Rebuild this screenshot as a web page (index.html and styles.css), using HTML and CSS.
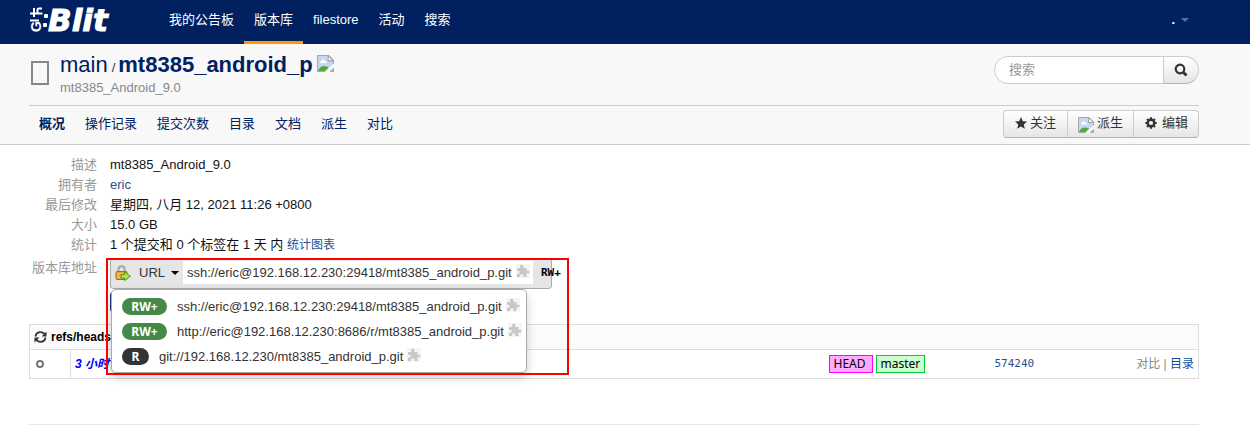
FILE: index.html
```html
<!DOCTYPE html>
<html lang="zh-CN">
<head>
<meta charset="utf-8">
<title>mt8385_android_p</title>
<link rel="stylesheet" href="styles.css">
</head>
<body>
<svg class="defs" aria-hidden="true">
  <symbol id="broken" viewBox="0 0 16 16">
    <path d="M.5 .5h10.500l4.500 4.500v10.500h-15z" fill="#c6d7f5" stroke="#a8a8a8"/>
    <path d="M3 7.500h6c0-2-1-2-1.800-1.800C6.500 3.500 4.500 4 4.500 5.500 3 5.500 3 6.500 3 7.500z" fill="#fff"/>
    <path d="M1 15c1-4 5-5 7-4.500l3 1L8 15z" fill="#53ab36"/>
    <path d="M10.500 .5v5h5z" fill="#fff" stroke="#a0a0a0"/>
    <path d="M7 16l9-8v4l-4 4z" fill="#f8f8f8"/>
    <path d="M12 15.500h3.500V12z" fill="#aaa"/>
  </symbol>
  <symbol id="puzzle" viewBox="0 0 14 14">
    <rect width="14" height="14" fill="#f5f5f5"/>
    <path d="M1 4h3.500C3.500 2.500 4 .8 5.700.8S8 2.500 7 4h3.500v3c1.500-1 3-.5 3 1s-1.500 2-3 1v4H7.200c1-2-.2-2.800-1.400-2.800S3.500 11.500 4.200 13H1V9.500c1.600.8 2.600 0 2.600-1.200S2.500 6.300 1 7z" fill="#c8c8c8"/>
  </symbol>
</svg>

<header class="topbar">
  <a class="logo" href="#" aria-label="Gitblit">
    <svg width="84" height="36" viewBox="0 0 84 36">
      <text class="logo-git" transform="translate(12 30) rotate(-90)">G</text>
      <path d="M1 18.500h9M1 11.500h12.500M5 6v9M8.500 11.500V7.500q0-1 1.500-1h3" fill="none" stroke="#fff" stroke-width="2"/>
      <rect x="15" y="12" width="4" height="4" rx="1" fill="#fff"/>
      <rect x="14" y="21" width="4" height="4" rx="1" fill="#fff"/>
      <text class="logo-blit" x="19" y="29">Blit</text>
    </svg>
  </a>
  <nav class="mainnav">
    <a href="#">我的公告板</a>
    <a class="current" href="#">版本库</a>
    <a href="#">filestore</a>
    <a href="#">活动</a>
    <a href="#">搜索</a>
  </nav>
  <a class="user" href="#"><span>.</span><i class="caret"></i></a>
</header>

<section class="repohead">
  <div class="titlebar">
    <span class="repoicon"></span>
    <div class="titles">
      <h1><a href="#">main</a><small>/</small><a class="strong" href="#">mt8385_android_p</a><svg width="17" height="17"><use href="#broken"/></svg></h1>
      <p>mt8385_Android_9.0</p>
    </div>
    <form class="search">
      <input type="text" placeholder="搜索" aria-label="搜索">
      <button type="button" aria-label="搜索"><svg width="14" height="14" viewBox="0 0 14 14"><circle cx="6" cy="6" r="4.300" fill="none" stroke="#333" stroke-width="2.200"/><path d="M9 9l3.500 3.500" stroke="#333" stroke-width="2.800"/></svg></button>
    </form>
  </div>
  <div class="tabs">
    <nav>
      <a class="current" href="#">概况</a>
      <a href="#">操作记录</a>
      <a href="#">提交次数</a>
      <a href="#">目录</a>
      <a href="#">文档</a>
      <a href="#">派生</a>
      <a href="#">对比</a>
    </nav>
    <div class="actions">
      <button type="button"><svg width="12" height="12" viewBox="0 0 12 12"><path d="M6 0l1.800 4.200 4.200.4-3.200 2.800 1 4.400L6 9.500l-3.800 2.300 1-4.400L0 4.600l4.200-.4z" fill="#333"/></svg>关注</button>
      <button type="button"><svg class="low" width="16" height="16"><use href="#broken"/></svg>派生</button>
      <button type="button"><svg class="gear" width="12" height="12" viewBox="0 0 12 12"><g stroke="#333"><circle cx="6" cy="6" r="3.300" fill="none" stroke-width="2.400"/><path d="M6 .3v1.700M6 10v1.700M.3 6H2M10 6h1.700M2 2l1.200 1.200M8.800 8.800L10 10M10 2L8.800 3.200M3.200 8.800L2 10" stroke-width="2.200"/></g></svg>编辑</button>
    </div>
  </div>
</section>

<main>
  <dl class="meta">
    <dt>描述</dt><dd>mt8385_Android_9.0</dd>
    <dt>拥有者</dt><dd><a href="#">eric</a></dd>
    <dt>最后修改</dt><dd>星期四, 八月 12, 2021 11:26 +0800</dd>
    <dt>大小</dt><dd>15.0 GB</dd>
    <dt>统计</dt><dd>1 个提交和 0 个标签在 1 天 内 <a class="chart" href="#">统计图表</a></dd>
    <dt class="urllabel">版本库地址</dt>
    <dd class="clone">
      <div class="urlbar">
        <button class="urlmenu" type="button">
          <svg width="16" height="16" viewBox="0 0 16 16"><path d="M3.500 7V4.200a3 3 0 0 1 6 0V7" fill="none" stroke="#a5a5a5" stroke-width="2"/><rect x="1" y="6.500" width="11" height="8" rx="1" fill="#e9a43d" stroke="#a8701b"/><path d="M2 9h8M2 12h8" stroke="#fbd27d"/><path d="M6 9.500h3.500v-2.500l6 4.200-6 4.300v-2.500H6z" fill="#b7e34d" stroke="#4c9a1d"/></svg>
          URL<i class="caret"></i>
        </button>
        <div class="urlvalue">ssh://eric@192.168.12.230:29418/mt8385_android_p.git<svg width="14" height="14"><use href="#puzzle"/></svg></div>
        <span class="perm">RW+</span>
      </div>
      <button class="clonebtn" type="button" aria-label="clone"></button>
      <ul class="menu">
        <li><b>RW+</b><a href="#">ssh://eric@192.168.12.230:29418/mt8385_android_p.git</a><svg width="14" height="14"><use href="#puzzle"/></svg></li>
        <li><b>RW+</b><a href="#">http://eric@192.168.12.230:8686/r/mt8385_android_p.git</a><svg width="14" height="14"><use href="#puzzle"/></svg></li>
        <li><b class="read">R</b><a href="#">git://192.168.12.230/mt8385_android_p.git</a><svg width="14" height="14"><use href="#puzzle"/></svg></li>
      </ul>
      <div class="highlight"></div>
    </dd>
  </dl>

  <table class="log">
    <thead>
      <tr><th colspan="5"><svg width="13" height="12" viewBox="0 0 13 12"><path d="M1.500 5.500C2 2.500 4 1.200 6.500 1.200c2 0 3 .8 4.300 2M11.500 6.500C11 9.500 9 10.800 6.500 10.800c-2 0-3-.8-4.300-2" fill="none" stroke="#333" stroke-width="1.800"/><path d="M12.500.5v5h-5zM.5 11.500v-5h5z" fill="#333"/></svg>refs/heads</th></tr>
    </thead>
    <tbody>
      <tr>
        <td class="dot"><i></i></td>
        <td class="when">3 小时</td>
        <td class="refs"><span class="head">HEAD</span><span class="branch">master</span></td>
        <td class="hash"><a href="#">574240</a></td>
        <td class="links">对比 | <a href="#">目录</a></td>
      </tr>
    </tbody>
  </table>
  <hr>
</main>
</body>
</html>
```
FILE: styles.css
```css
* { box-sizing: border-box; }
body {
  margin: 0;
  background: #fff;
  color: #111;
  font: 13px/20px "Liberation Sans", "Noto Sans CJK SC", sans-serif;
}
a { color: #2b4f91; text-decoration: none; }
button, input { font: inherit; margin: 0; }
svg { flex: none; }
.defs { display: none; }

.topbar {
  display: flex;
  height: 44px;
  padding: 0 61px 0 29px;
  background: #002060;
}
.topbar a { color: #fff; }
.logo { width: 130px; padding-top: 2px; }
.logo-git { font: bold 14px "Liberation Sans", sans-serif; fill: #fff; }
.logo-blit {
  font: italic bold 31px "DejaVu Sans", sans-serif;
  fill: #fff;
  stroke: #fff;
  stroke-width: 1px;
}
.mainnav { display: flex; }
.mainnav a { padding: 10px 10px 0; }
.mainnav .current { border-bottom: 3px solid #ff9900; }
.user { display: flex; gap: 6px; margin-left: auto; padding-top: 10px; font-weight: bold; }
.caret {
  width: 0;
  height: 0;
  border: 4px solid transparent;
  border-top-color: currentColor;
  border-bottom: 0;
}
.user .caret { margin-top: 8px; opacity: .35; }

.repohead {
  padding: 0 51px 0 29px;
  background: #f8f8f8;
  border-bottom: 1px solid #ccc;
}
.titlebar {
  display: flex;
  height: 62px;
  border-bottom: 1px solid #ccc;
}
.repoicon {
  width: 18px;
  height: 24px;
  margin: 17px 11px 0 2px;
  border: 2px solid #888;
}
.titles { padding-top: 8px; }
h1 {
  display: flex;
  align-items: baseline;
  margin: 0;
  font-size: 22px;
  font-weight: normal;
  line-height: 25px;
}
h1 a, .tabs a { color: #002060; }
h1 .strong { font-weight: bold; }
h1 small { margin: 0 3px 0 4px; font-size: 13px; color: #333; }
h1 svg { margin-left: 4px; }
.titles p { margin: 0; line-height: 16px; color: #888; }
.search { display: flex; margin: 12px 0 0 auto; height: 28px; }
.search input {
  width: 170px;
  padding: 0 14px;
  border: 1px solid #ccc;
  border-radius: 14px 0 0 14px;
  background: #fff;
}
.search input::placeholder { color: #999; }
.search button, .actions button {
  border: 1px solid #ccc;
  border-bottom-color: #b3b3b3;
  background: linear-gradient(#fff, #e6e6e6);
  color: #333;
}
.search button {
  width: 36px;
  margin-left: -1px;
  padding: 5px 0 0;
  border-radius: 0 14px 14px 0;
}
.tabs { display: flex; justify-content: space-between; height: 38px; }
.tabs nav { display: flex; padding-top: 8px; }
.tabs nav a { padding: 0 10px; }
.tabs .current { font-weight: bold; }
.actions { display: flex; padding-top: 4px; height: 32px; }
.actions button {
  display: flex;
  align-items: center;
  gap: 3px;
  padding: 0 11px 2px;
}
.actions button + button { margin-left: -1px; padding: 0 10px 2px; }
.actions button:first-child { border-radius: 4px 0 0 4px; }
.actions button:last-child { border-radius: 0 4px 4px 0; padding-left: 11px; }
.actions .low { margin-top: 4px; }
.actions .gear { margin-right: 2px; }

main { padding: 10px 51px 0 29px; }
.meta {
  display: grid;
  grid-template-columns: 68px 1fr;
  column-gap: 13px;
  margin: 0;
}
.meta dt { color: #999; text-align: right; white-space: nowrap; }
.meta dd { margin: 0; }
.chart { font-size: 12px; }
.meta .urllabel { padding-top: 3px; }
.meta .clone { position: relative; padding-top: 3px; }
.urlbar {
  display: flex;
  align-items: center;
  width: 442px;
  height: 31px;
  padding-bottom: 2px;
  border: 1px solid #aaa;
  border-top-color: #ccc;
  border-radius: 4px;
  background: #e5e5e5;
}
.urlmenu {
  display: flex;
  flex: none;
  align-items: center;
  gap: 8px;
  width: 72px;
  padding: 0 0 0 4px;
  border: 0;
  background: none;
  color: #333;
}
.urlmenu .caret { color: #000; margin-left: -2px; }
.urlvalue, .menu li {
  display: flex;
  align-items: center;
  white-space: nowrap;
  color: #333;
}
.urlvalue {
  flex: none;
  width: 350px;
  height: 23px;
  padding: 0 4px;
  background: #fff;
}
.urlvalue svg, .menu svg { margin: 0 0 4px 4px; }
.perm {
  margin-left: 8px;
  color: #000;
  font: bold 11px/20px "DejaVu Sans Mono", monospace;
}
.clonebtn {
  display: block;
  width: 80px;
  height: 20px;
  margin: 3px 0 12px;
  border: 0;
  border-radius: 3px;
  background: #1c3f7c;
}
.menu {
  position: absolute;
  top: 34px;
  left: 1px;
  z-index: 1;
  width: 416px;
  height: 84px;
  margin: 0;
  padding: 4px 0 4px 10px;
  list-style: none;
  background: #fff;
  border: 1px solid #aaa;
  border-radius: 5px;
  box-shadow: 0 5px 10px rgba(0, 0, 0, .2);
}
.menu li { height: 25px; }
.menu a { color: #333; }
.menu b {
  flex: none;
  min-width: 45px;
  margin-right: 10px;
  border-radius: 9px;
  background: #468847;
  color: #fff;
  font: bold 12px/17px "Noto Sans", sans-serif;
  text-align: center;
}
.menu .read { min-width: 27px; background: #333; }
.highlight {
  position: absolute;
  top: 3px;
  left: -4px;
  z-index: 2;
  width: 463px;
  height: 117px;
  border: 2px solid #f00;
  pointer-events: none;
}

.log {
  width: 100%;
  border: 1px solid #ddd;
  border-collapse: collapse;
  font-size: 12px;
}
.log th {
  height: 25px;
  padding: 0 4px;
  border: 1px solid #ddd;
  background: #fbfbfb;
  color: #000;
  font-size: 12px;
  line-height: 18px;
  text-align: left;
}
.log th svg { margin-right: 4px; vertical-align: -2px; }
.log td { height: 29px; padding: 0 4px; line-height: 18px; white-space: nowrap; }
.log .dot { width: 41px; padding-left: 6px; border-right: 1px solid #ddd; }
.dot i {
  display: block;
  width: 8px;
  height: 8px;
  border: 2px solid #777;
  border-radius: 50%;
}
.log .when { color: #00f; font-style: italic; font-weight: bold; }
.log .refs { width: 166px; padding: 0; }
.refs span {
  display: inline-block;
  margin-right: 3px;
  padding: 0 4px;
  border: 1px solid;
  color: #000;
  font: 12px/16px "Noto Sans", sans-serif;
}
.refs .head { padding-right: 6px; background: #ffaaff; border-color: #f0f; }
.refs .branch { background: #ccffcc; border-color: #00cc33; }
.log .hash { width: 130px; padding: 0; font: 11px/18px "DejaVu Sans Mono", monospace; }
.log .links { width: 74px; color: #888; text-align: right; }
.links a { color: #0f4e9b; }
hr { margin: 45px 0 0; border: 0; border-top: 1px solid #e5e5e5; }
```
